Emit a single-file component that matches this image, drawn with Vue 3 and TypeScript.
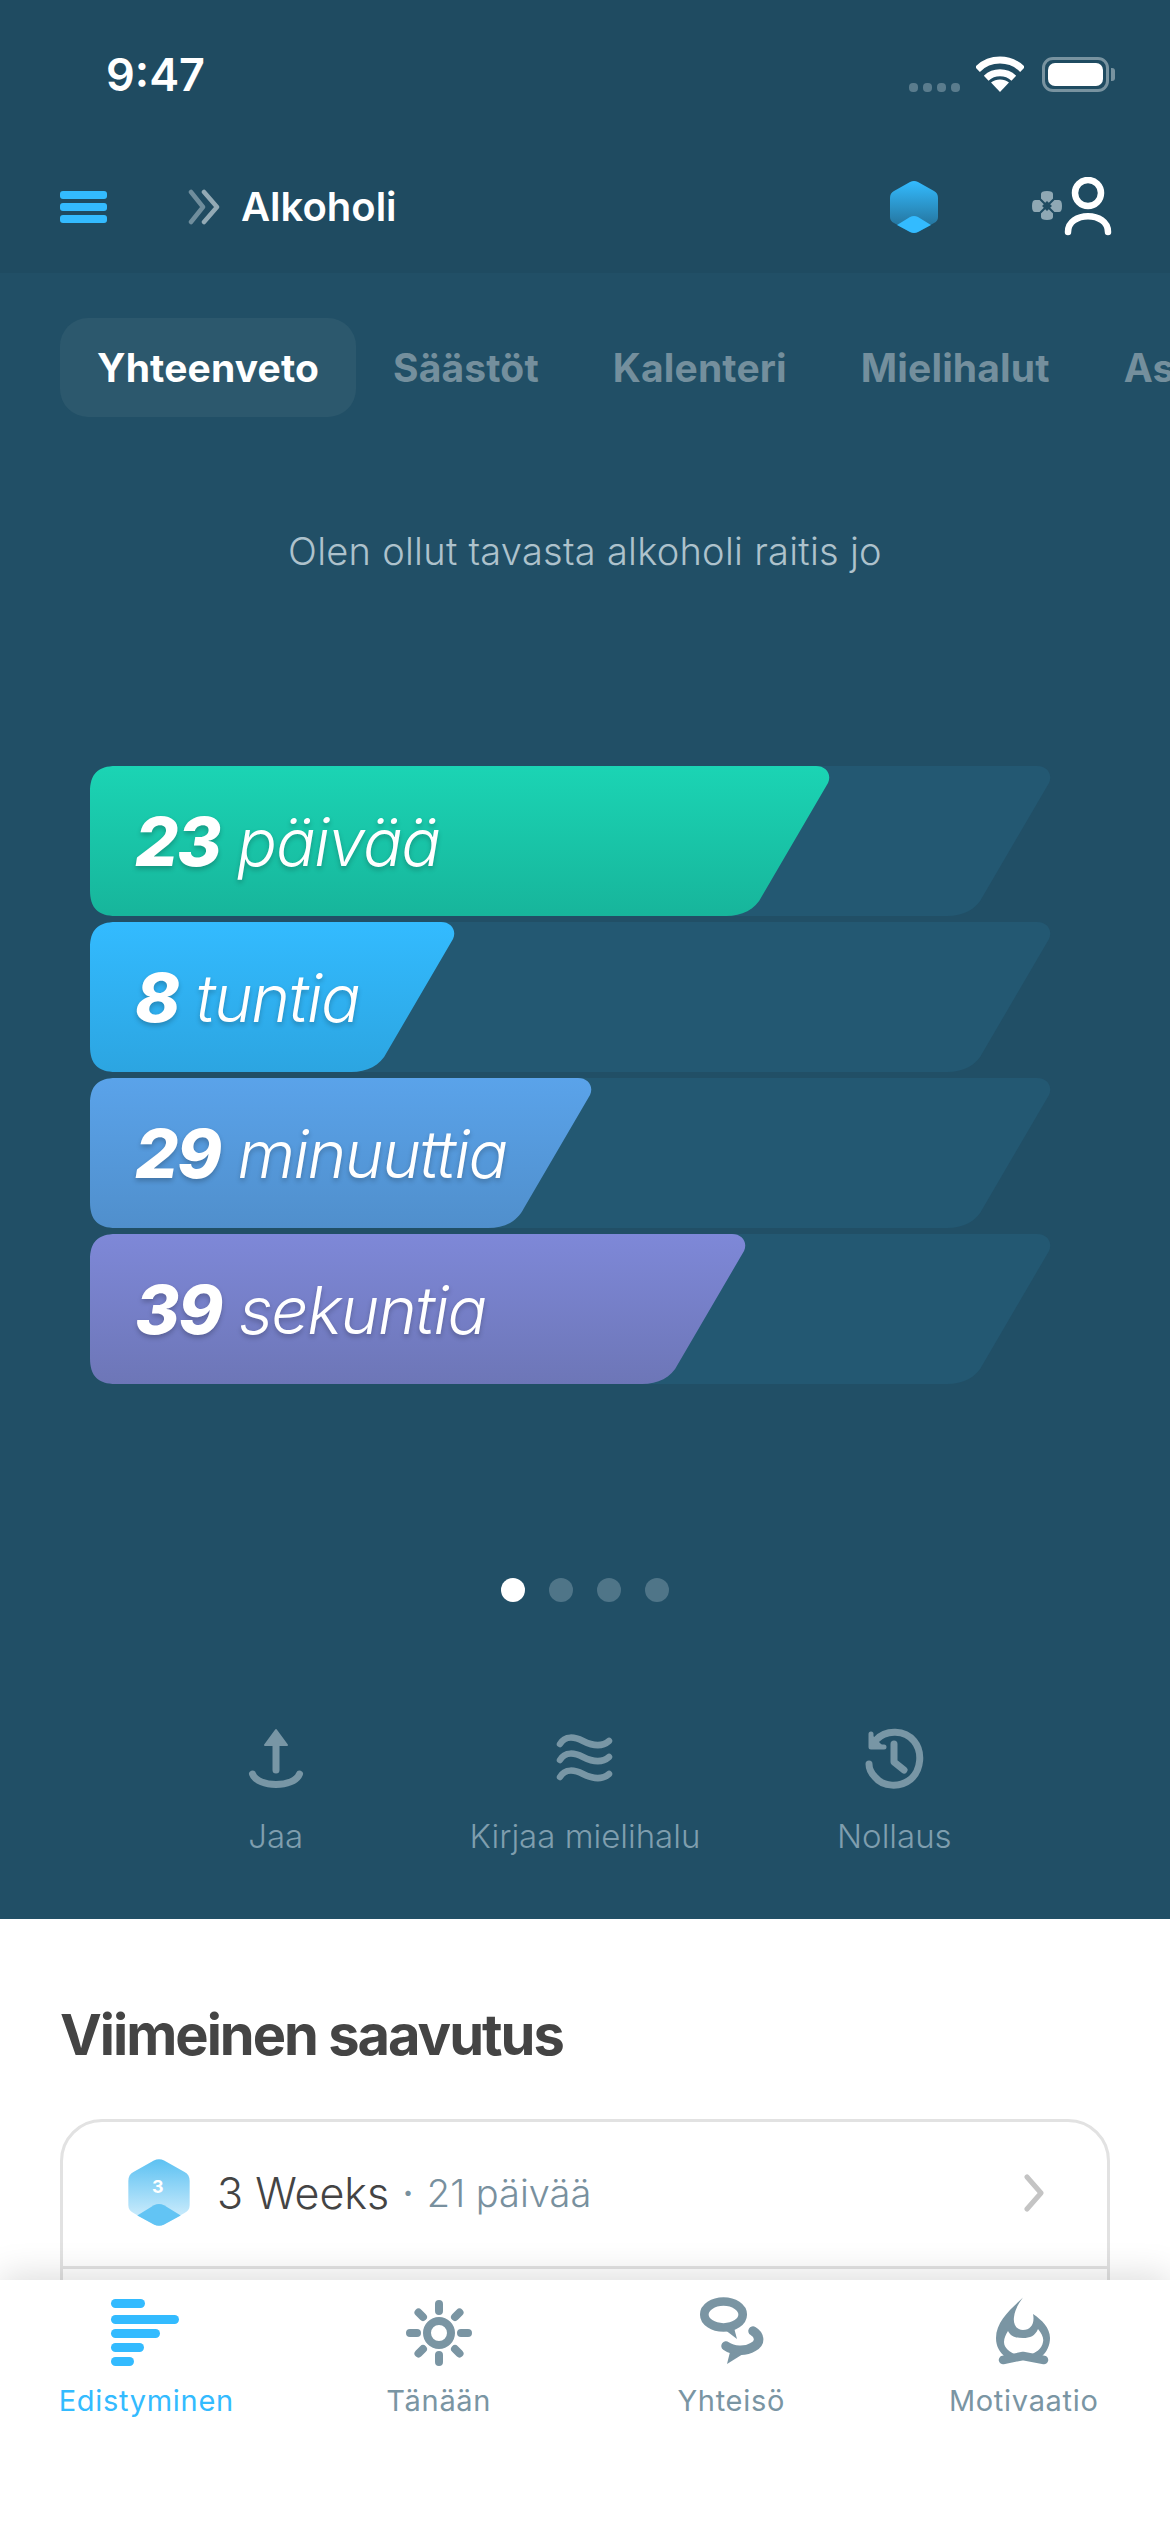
<script setup lang="ts">
interface Bar {
  value: number
  unit: string
  width: number
  from: string
  to: string
}

const tabs = ['Yhteenveto', 'Säästöt', 'Kalenteri', 'Mielihalut', 'As']

const bars: Bar[] = [
  { value: 23, unit: 'päivää', width: 740, from: '#1bd4b4', to: '#17b59b' },
  { value: 8, unit: 'tuntia', width: 365, from: '#33bbff', to: '#2ca5e1' },
  { value: 29, unit: 'minuuttia', width: 502, from: '#5aa3ea', to: '#508fcc' },
  { value: 39, unit: 'sekuntia', width: 656, from: '#7e88d8', to: '#6d76b7' },
]

// slanted bar shape, w is the x of the top right tip
const barPath = (w: number) =>
  `M26 0H${w - 14}C${w - 4} 0 ${w + 2} 8 ${w - 2} 17L${w - 68} 130C${w - 75} 144 ${w - 88} 150 ${w - 104} 150H26C8 150 0 142 0 124V26C0 8 8 0 26 0Z`

const dots = [0, 1, 2, 3]
</script>

<template>
  <div class="app">
    <div class="content">
      <section class="hero">
        <header class="top">
          <div class="status">
            <span class="clock">9:47</span>
            <div class="status-icons">
              <div class="signal"><i></i><i></i><i></i><i></i></div>
              <svg class="wifi" width="48" height="36" viewBox="0 0 48 36">
                <path d="M1.4 13.4C14 1 34 1 46.6 13.4" fill="none" stroke="#fff" stroke-width="7" />
                <path d="M10.2 22.2C18 15 30 15 37.8 22.2" fill="none" stroke="#fff" stroke-width="7" />
                <path d="M24 36L15 26.5C20 22.5 28 22.5 33 26.5Z" fill="#fff" />
              </svg>
              <div class="battery"><i></i></div>
              <div class="battery-cap"></div>
            </div>
          </div>
          <nav class="nav">
            <div class="burger"><i></i><i></i><i></i></div>
            <svg class="crumb" width="34" height="36" viewBox="0 0 34 36" fill="none" stroke-linecap="round" stroke-linejoin="round" stroke-width="4.5">
              <path d="M3 3L15 18L3 33" stroke="#6f8d9c" />
              <path d="M16 3L29 18L16 33" stroke="#93aab5" />
            </svg>
            <span class="crumb-title">Alkoholi</span>
            <svg class="gem" width="48" height="54" viewBox="0 0 48 54">
              <defs>
                <linearGradient id="gemFill" x1="0" y1="0" x2="0" y2="1">
                  <stop offset="0" stop-color="#33bbff" />
                  <stop offset="1" stop-color="#236a8f" />
                </linearGradient>
              </defs>
              <path d="M20 2Q24 0 28 2L44 11Q48 13 48 18V37Q48 41 44 43L28 52Q24 54 20 52L4 43Q0 41 0 37V18Q0 13 4 11Z" fill="url(#gemFill)" />
              <path d="M7 45L20 37Q24 35 28 37L41 45L28 52Q24 54 20 52Z" fill="#33bbff" />
            </svg>
            <svg class="person" width="82" height="60" viewBox="0 0 82 60">
              <path d="M9 17Q9 14 15 14Q21 14 21 17V23H27Q30 23 30 29Q30 35 27 35H21V40Q21 43 15 43Q9 43 9 40V35H3Q0 35 0 29Q0 23 3 23H9Z" fill="#8fa8b4" />
              <path d="M8 22L22 36M22 22L8 36" stroke="#1f4b61" stroke-width="2" />
              <rect x="11.500" y="25.500" width="7" height="7" transform="rotate(45 15 29)" fill="#1f4b61" />
              <circle cx="56" cy="16" r="13" fill="none" stroke="#fff" stroke-width="6.5" />
              <path d="M36 55C36 34 76 34 76 55" fill="none" stroke="#fff" stroke-width="6.5" stroke-linecap="round" />
            </svg>
          </nav>
        </header>

        <div class="tabs">
          <span v-for="(tab, i) in tabs" :key="tab" class="tab" :class="{ active: i === 0 }">{{ tab }}</span>
        </div>

        <p class="lead">Olen ollut tavasta alkoholi raitis jo</p>

        <div class="bars">
          <div v-for="bar in bars" :key="bar.unit" class="bar">
            <svg class="bar-bg" width="961" height="150" viewBox="0 0 961 150">
              <defs>
                <linearGradient :id="`fill-${bar.value}`" x1="0" y1="0" x2="0" y2="1">
                  <stop offset="0" :stop-color="bar.from" />
                  <stop offset="1" :stop-color="bar.to" />
                </linearGradient>
              </defs>
              <path :d="barPath(961)" fill="#235872" />
              <path :d="barPath(bar.width)" :fill="`url(#fill-${bar.value})`" />
            </svg>
            <span class="bar-text"><b>{{ bar.value }}</b> {{ bar.unit }}</span>
          </div>
        </div>

        <div class="pager">
          <span v-for="d in dots" :key="d" class="dot" :class="{ on: d === 0 }"></span>
        </div>

        <div class="actions">
          <div class="action">
            <svg width="64" height="64" viewBox="0 0 64 64" fill="none" stroke="#7896a5" stroke-width="7" stroke-linecap="round">
              <path d="M32 12V44" />
              <path d="M32 4L43 19H21Z" fill="#7896a5" stroke-width="2" stroke-linejoin="round" />
              <path d="M8.500 48C14 62 50 62 55.500 48" />
            </svg>
            <span>Jaa</span>
          </div>
          <div class="action">
            <svg width="64" height="64" viewBox="0 0 64 64" fill="none" stroke="#7896a5" stroke-width="6.500" stroke-linecap="round">
              <path d="M7 18C12 9 22 11 30 15C38 19 48 22 56 15" />
              <path d="M7 34C12 25 22 27 30 31C38 35 48 38 56 31" />
              <path d="M7 51C12 42 22 44 30 48C38 52 48 55 56 48" />
            </svg>
            <span>Kirjaa mielihalu</span>
          </div>
          <div class="action">
            <svg width="64" height="64" viewBox="0 0 64 64" fill="none" stroke="#7896a5" stroke-width="7" stroke-linecap="round" stroke-linejoin="round">
              <path d="M14 14C24 3 43 4 52 15C61 26 59 44 49 53C38 62 21 61 13 51C9 47 7 42 7 38" />
              <path d="M9 8V21H22" fill="#7896a5" stroke-width="5" />
              <path d="M32 18V36L42 44" />
            </svg>
            <span>Nollaus</span>
          </div>
        </div>
      </section>

      <section class="latest">
        <h2>Viimeinen saavutus</h2>
        <div class="card">
          <div class="card-row">
            <svg class="medal" width="62" height="69" viewBox="0 0 48 54">
              <defs>
                <linearGradient id="medalFill" x1="0" y1="0" x2="0" y2="1">
                  <stop offset="0" stop-color="#5cc1f2" />
                  <stop offset="0.8" stop-color="#c2e8fb" />
                </linearGradient>
              </defs>
              <path d="M20 2Q24 0 28 2L44 11Q48 13 48 18V37Q48 41 44 43L28 52Q24 54 20 52L4 43Q0 41 0 37V18Q0 13 4 11Z" fill="url(#medalFill)" />
              <path d="M7 45L20 37Q24 35 28 37L41 45L28 52Q24 54 20 52Z" fill="#62c4f4" />
              <text x="23" y="27" text-anchor="middle" class="medal-num">3</text>
            </svg>
            <span class="ach-name">3 Weeks</span>
            <span class="ach-sep">·</span>
            <span class="ach-days">21 päivää</span>
            <svg class="chev" width="26" height="38" viewBox="0 0 26 38" fill="none" stroke="#c4c4c4" stroke-width="5" stroke-linecap="round" stroke-linejoin="round">
              <path d="M7 3L21 19L7 35" />
            </svg>
          </div>
          <div class="card-row second"></div>
        </div>
      </section>
    </div>

    <footer class="tabbar">
      <div class="tb-item active">
        <svg width="72" height="72" viewBox="0 0 72 72" fill="#33bbff">
          <rect x="1" y="5" width="34" height="9" rx="4.500" />
          <rect x="1" y="21" width="68" height="9" rx="4.500" />
          <rect x="1" y="35" width="49" height="9" rx="4.500" />
          <rect x="1" y="49" width="33" height="9" rx="4.500" />
          <rect x="1" y="63" width="23" height="9" rx="4.500" />
        </svg>
        <span>Edistyminen</span>
      </div>
      <div class="tb-item">
        <svg width="72" height="72" viewBox="0 0 72 72" fill="none" stroke="#7a95a3" stroke-width="8" stroke-linecap="round">
          <circle cx="36" cy="39" r="12" />
          <path d="M36 10V17M36 61V68M7 39H14M58 39H65M15.500 18.500L20 23M52 55L56.500 59.500M15.500 59.500L20 55M52 23L56.500 18.500" />
        </svg>
        <span>Tänään</span>
      </div>
      <div class="tb-item">
        <svg width="72" height="72" viewBox="0 0 72 72">
          <ellipse cx="28.500" cy="20.500" rx="19.200" ry="13" fill="none" stroke="#7a95a3" stroke-width="8.700" />
          <path d="M25 32L42 45L38 30Z" fill="#7a95a3" />
          <path d="M58 37C65 41 66 49 58 53C50 58 38 57 31 52" fill="none" stroke="#7a95a3" stroke-width="9.500" stroke-linecap="round" />
          <path d="M35 58L32 70L48 60Z" fill="#7a95a3" />
        </svg>
        <span>Yhteisö</span>
      </div>
      <div class="tb-item">
        <svg width="72" height="72" viewBox="0 0 72 72">
          <path d="M35 3.500C24 14 8 27 8 44C8 53 12 58 17 63H53C59 58 62 51 62 44C62 34 54 26 45 20C47 29 43 36 35 36C28 36 25 30 26 23C27 15 31 9 35 3.500Z" fill="#7a95a3" />
          <path d="M20 37C23 43 28 44 35 44C42 44 47 42 50 35C54 40 56 44 55 48C54 55 47 59 42 61L35 64L28 61C22 58 16 54 16 48C16 44 18 40 20 37Z" fill="#fff" />
          <path d="M15 66L35 62L56 66" fill="none" stroke="#7a95a3" stroke-width="8.500" stroke-linecap="round" stroke-linejoin="round" />
        </svg>
        <span>Motivaatio</span>
      </div>
    </footer>
  </div>
</template>

<style scoped>
.app {
  width: 1170px;
  height: 2532px;
  display: flex;
  flex-direction: column;
  overflow: hidden;
  background: #fff;
  font-family: Inter, "Liberation Sans", sans-serif;
}

.content {
  height: 2280px;
  overflow: hidden;
  flex: none;
}

.hero {
  background: #214f66;
  padding-bottom: 63px;
  overflow: hidden;
}

.top {
  background: #1f4b61;
  height: 273px;
  display: flex;
  flex-direction: column;
}

.status {
  height: 140px;
  padding: 8px 55px 0 106px;
  box-sizing: border-box;
  display: flex;
  align-items: center;
  justify-content: space-between;
}

.clock {
  color: #fff;
  font-size: 45px;
  font-weight: 600;
}

.status-icons {
  display: flex;
  align-items: flex-end;
}

.signal {
  display: flex;
  gap: 5px;
  margin-right: 16px;
}

.signal i {
  width: 9px;
  height: 9px;
  border-radius: 4px;
  background: #5a7c8d;
}

.wifi {
  margin-right: 18px;
}

.battery {
  width: 67px;
  height: 35px;
  box-sizing: border-box;
  border: 3px solid rgba(255, 255, 255, 0.4);
  border-radius: 11px;
  padding: 3px;
}

.battery i {
  display: block;
  height: 100%;
  border-radius: 7px;
  background: #fff;
}

.battery-cap {
  width: 4px;
  height: 13px;
  margin: 0 0 11px 2px;
  border-radius: 0 3px 3px 0;
  background: rgba(255, 255, 255, 0.4);
}

.nav {
  height: 133px;
  padding: 0 56px 0 60px;
  display: flex;
  align-items: center;
}

.burger {
  width: 47px;
  display: flex;
  flex-direction: column;
  gap: 4px;
  margin-right: 81px;
}

.burger i {
  height: 8px;
  border-radius: 3px;
  background: #33bbff;
}

.crumb {
  margin-right: 19px;
}

.crumb-title {
  color: #fff;
  font-size: 40px;
  font-weight: 600;
  flex: 1;
}

.gem {
  margin-right: 94px;
}

.tabs {
  margin: 45px 0 0 60px;
  display: flex;
  white-space: nowrap;
  overflow: hidden;
}

.tab {
  height: 99px;
  line-height: 99px;
  padding: 0 37px;
  font-size: 39px;
  font-weight: 700;
  letter-spacing: 0.15px;
  color: #748f9d;
  border-radius: 28px;
}

.tab.active {
  color: #fff;
  background: #2c586d;
}

.lead {
  margin: 111px 0 0;
  height: 46px;
  line-height: 46px;
  text-align: center;
  font-size: 38px;
  font-weight: 300;
  letter-spacing: 0.27px;
  color: #aec2cc;
}

.bars {
  margin: 192px 0 0 90px;
  display: flex;
  flex-direction: column;
  gap: 6px;
}

.bar {
  position: relative;
  height: 150px;
  display: flex;
  align-items: center;
  padding-left: 45px;
}

.bar-bg {
  position: absolute;
  left: 0;
  top: 0;
}

.bar-text {
  position: relative;
  color: #fff;
  font-size: 66px;
  font-weight: 300;
  font-style: italic;
  letter-spacing: -1.5px;
  text-shadow: 0 3px 5px rgba(0, 0, 0, 0.22);
}

.bar-text b {
  font-size: 68px;
  font-weight: 800;
}

.pager {
  margin-top: 194px;
  display: flex;
  justify-content: center;
  gap: 24px;
}

.dot {
  width: 24px;
  height: 24px;
  border-radius: 50%;
  background: #4f7588;
}

.dot.on {
  background: #fff;
}

.actions {
  margin: 124px 121px 0;
  display: grid;
  grid-template-columns: repeat(3, 1fr);
}

.action {
  display: flex;
  flex-direction: column;
  align-items: center;
  gap: 26px;
  color: #7f9eae;
  font-size: 33px;
  font-weight: 300;
  line-height: 40px;
  white-space: nowrap;
}

.latest {
  padding: 84px 60px 0;
}

.latest h2 {
  margin: 0 0 52px;
  height: 64px;
  line-height: 64px;
  font-size: 56px;
  font-weight: 700;
  letter-spacing: -2px;
  color: #444;
}

.card {
  border: 3px solid #e2e2e2;
  border-radius: 42px;
}

.card-row {
  height: 144px;
  box-sizing: border-box;
  display: flex;
  align-items: center;
  padding: 0 61px 3px 65px;
}

.second {
  border-top: 3px solid #e2e2e2;
}

.medal {
  margin-right: 27px;
}

.medal-num {
  fill: #fff;
  font-size: 14px;
  font-weight: 700;
}

.ach-name {
  font-size: 43px;
  font-weight: 300;
  color: #444;
}

.ach-sep {
  margin: 0 13px;
  font-size: 40px;
  color: #78909e;
}

.ach-days {
  flex: 1;
  font-size: 38px;
  font-weight: 300;
  color: #78909e;
}

.tabbar {
  position: relative;
  flex: 1;
  background: #fff;
  box-shadow: 0 -4px 34px rgba(0, 0, 0, 0.14);
  display: grid;
  grid-template-columns: repeat(4, 1fr);
  align-items: start;
  padding-top: 14px;
}

.tb-item {
  display: flex;
  flex-direction: column;
  align-items: center;
  gap: 17px;
  color: #7a95a3;
  font-size: 29px;
  line-height: 36px;
  letter-spacing: 0.7px;
}

.tb-item.active {
  color: #33bbff;
}
</style>
